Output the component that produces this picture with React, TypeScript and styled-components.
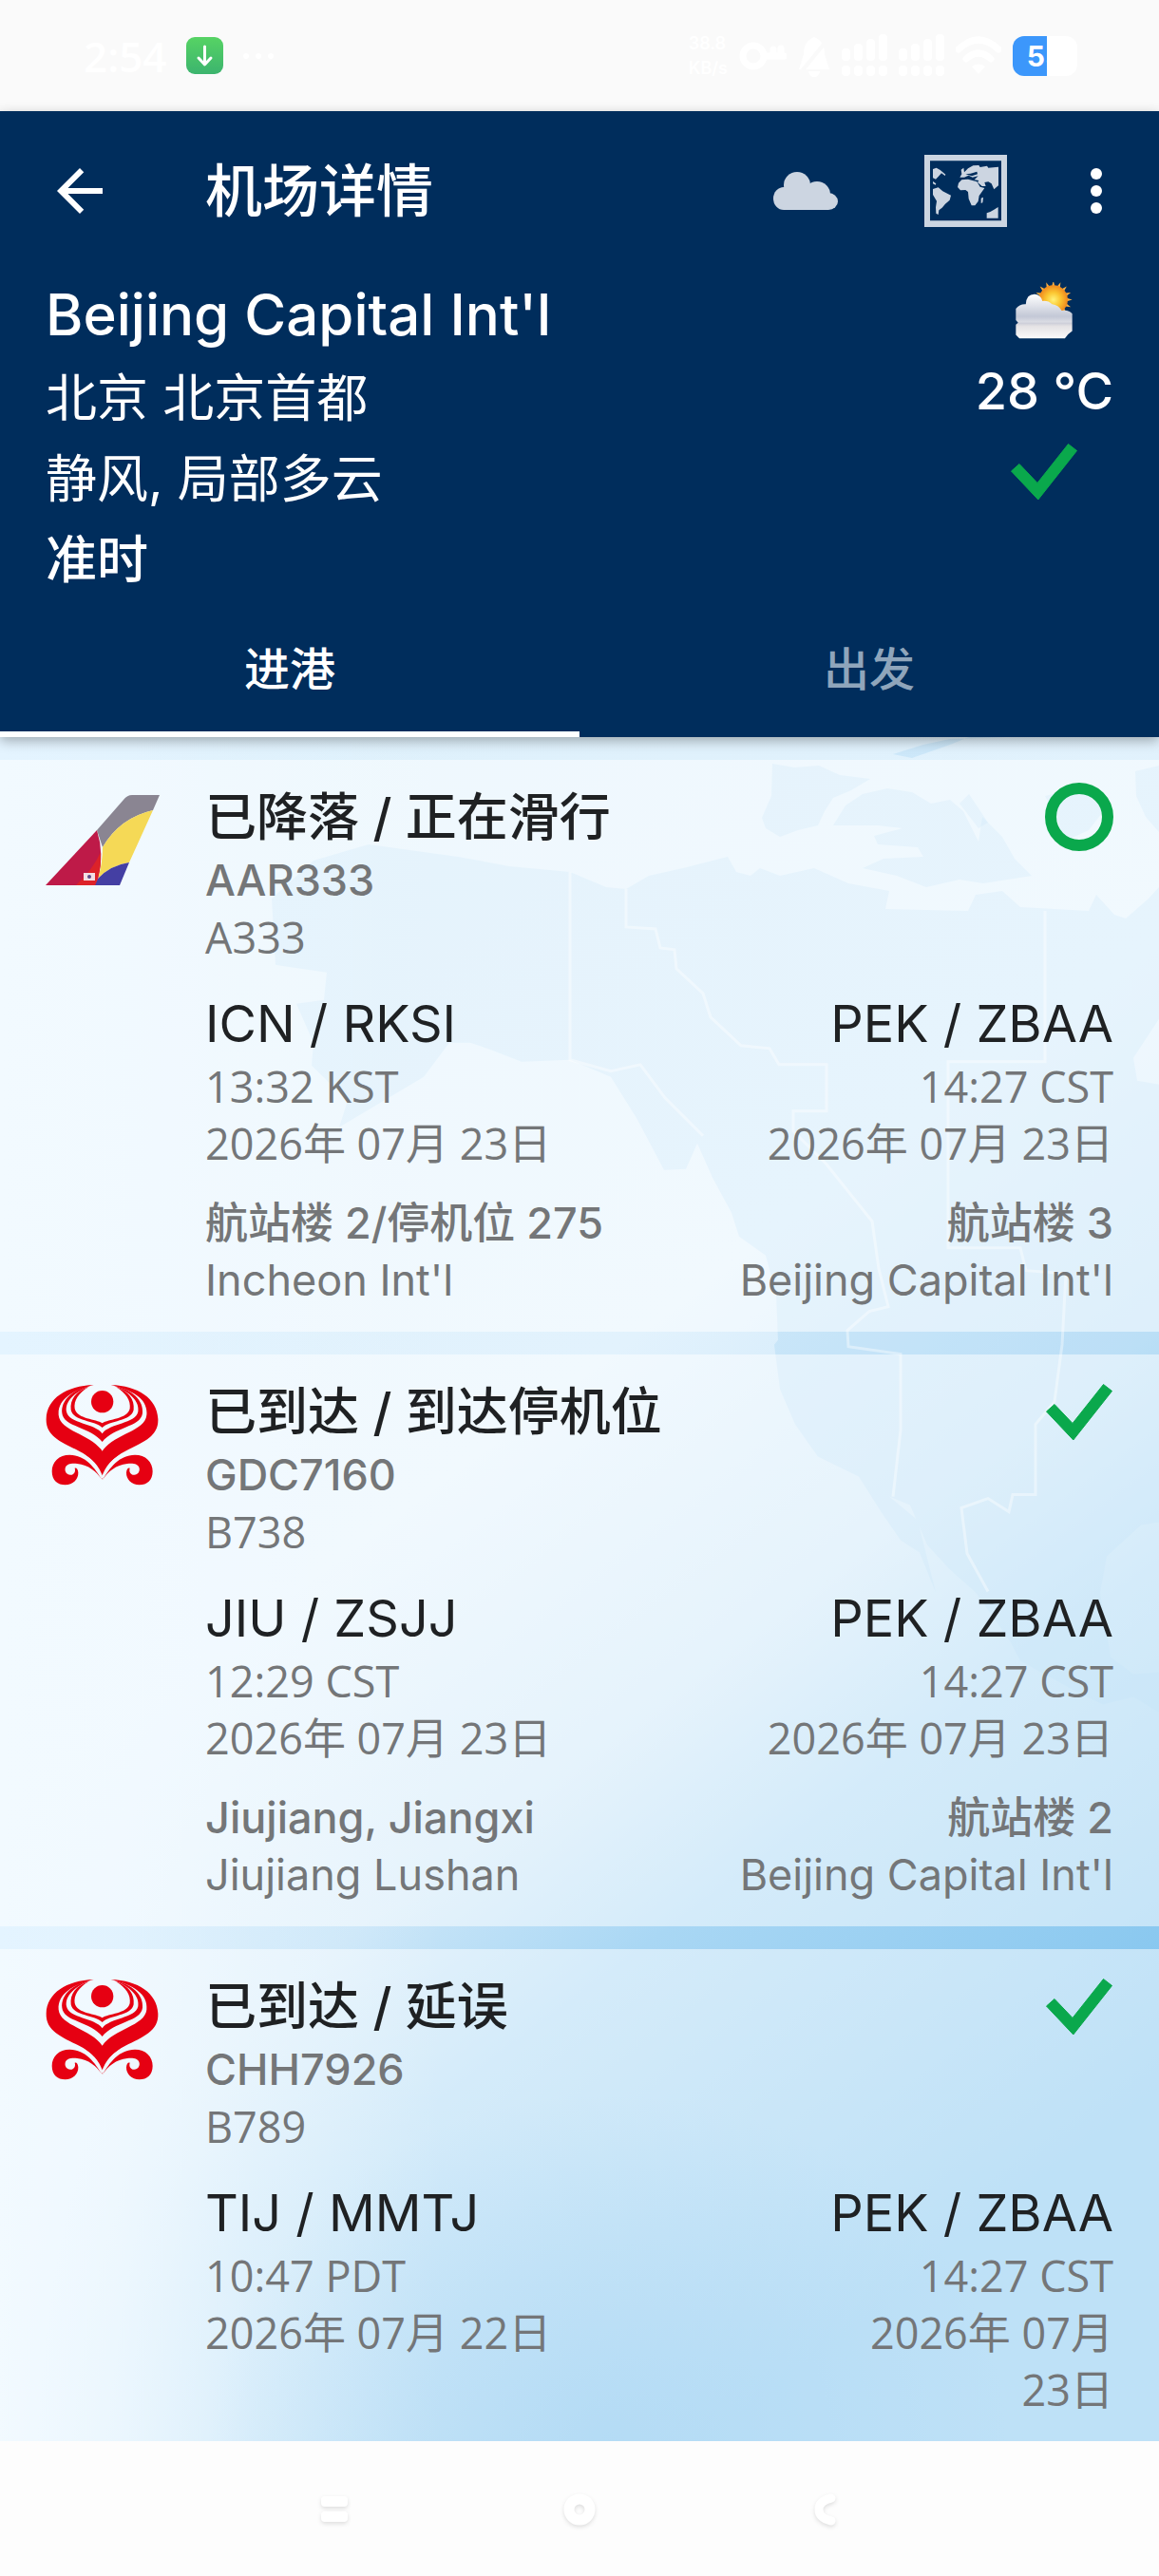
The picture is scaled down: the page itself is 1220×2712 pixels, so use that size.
import React, { useState } from "react";
import styled, { createGlobalStyle, css } from "styled-components";

type StatusKind = "taxiing" | "arrived";
type AirlineKind = "asiana" | "hainan";

type Stop = {
  codes: string;
  time: string;
  date: string;
  terminal?: string;
  airport?: string;
};

type Flight = {
  id: string;
  airline: AirlineKind;
  status: string;
  kind: StatusKind;
  aircraft: string;
  from: Stop;
  to: Stop;
  narrow?: boolean;
};

const flights: Flight[] = [
  {
    id: "AAR333",
    airline: "asiana",
    status: "已降落 / 正在滑行",
    kind: "taxiing",
    aircraft: "A333",
    from: {
      codes: "ICN / RKSI",
      time: "13:32 KST",
      date: "2026年 07月 23日",
      terminal: "航站楼 2/停机位 275",
      airport: "Incheon Int'l",
    },
    to: {
      codes: "PEK / ZBAA",
      time: "14:27 CST",
      date: "2026年 07月 23日",
      terminal: "航站楼 3",
      airport: "Beijing Capital Int'l",
    },
  },
  {
    id: "GDC7160",
    airline: "hainan",
    status: "已到达 / 到达停机位",
    kind: "arrived",
    aircraft: "B738",
    from: {
      codes: "JIU / ZSJJ",
      time: "12:29 CST",
      date: "2026年 07月 23日",
      terminal: "Jiujiang, Jiangxi",
      airport: "Jiujiang Lushan",
    },
    to: {
      codes: "PEK / ZBAA",
      time: "14:27 CST",
      date: "2026年 07月 23日",
      terminal: "航站楼 2",
      airport: "Beijing Capital Int'l",
    },
  },
  {
    id: "CHH7926",
    airline: "hainan",
    status: "已到达 / 延误",
    kind: "arrived",
    aircraft: "B789",
    narrow: true,
    from: {
      codes: "TIJ / MMTJ",
      time: "10:47 PDT",
      date: "2026年 07月 22日",
    },
    to: {
      codes: "PEK / ZBAA",
      time: "14:27 CST",
      date: "2026年 07月 23日",
    },
  },
];

const textFont = `Inter, "Noto Sans CJK SC", sans-serif`;
const figureFont = `"Open Sans", "Noto Sans CJK SC", sans-serif`;

const GlobalStyle = createGlobalStyle`
  *, *::before, *::after {
    box-sizing: border-box;
  }
  body {
    margin: 0;
    background: #fdfdfd;
    font-family: ${textFont};
    color: #1f2123;
  }
  h1, h2, h3, p {
    margin: 0;
    font-weight: 400;
  }
  button {
    border: 0;
    padding: 0;
    background: none;
    color: inherit;
    font: inherit;
    cursor: pointer;
  }
  svg {
    display: block;
    flex: none;
  }
`;

const Page = styled.div`
  min-height: 100vh;
  display: flex;
  flex-direction: column;
`;

/* status bar */

const StatusBar = styled.div`
  height: 117px;
  padding: 0 86px 0 88px;
  display: flex;
  align-items: center;
  justify-content: space-between;
  background: #fafafa;
  color: #fff;
`;

const StatusGroup = styled.div<{ $gap: number }>`
  display: flex;
  align-items: center;
  gap: ${(props) => props.$gap}px;
`;

const Clock = styled.span`
  font-family: ${figureFont};
  font-size: 44px;
  line-height: 60px;
  font-weight: 600;
`;

const NetSpeed = styled.span`
  display: flex;
  flex-direction: column;
  font-size: 18px;
  line-height: 26px;
  font-weight: 600;
`;

const Battery = styled.span`
  width: 68px;
  height: 42px;
  border-radius: 12px;
  background: linear-gradient(90deg, #3c97fb 36px, #fff 36px);
  font-size: 30px;
  line-height: 42px;
  font-weight: 700;
  text-align: center;
`;

/* header */

const Header = styled.header`
  position: relative;
  z-index: 1;
  background: #002d5c;
  color: #fff;
  box-shadow: 0 4px 12px rgba(0, 0, 0, 0.3);
`;

const Toolbar = styled.div`
  height: 168px;
  padding: 0 12px 0 48px;
  display: flex;
  align-items: center;
`;

const BackButton = styled.button`
  width: 168px;
`;

const ToolbarTitle = styled.h1`
  flex: 1;
  font-size: 60px;
  line-height: 80px;
  font-weight: 500;
`;

const ToolbarButton = styled.button<{ $width: number }>`
  width: ${(props) => props.$width}px;
  height: 168px;
  display: flex;
  align-items: center;
  justify-content: center;
`;

const Summary = styled.div`
  padding: 0 48px;
  display: flex;
  justify-content: space-between;
`;

const AirportName = styled.h2`
  font-size: 60px;
  line-height: 92px;
  font-weight: 500;
`;

const SummaryLine = styled.p<{ $strong?: boolean }>`
  font-size: 54px;
  line-height: 85px;
  font-weight: ${(props) => (props.$strong ? 500 : 400)};
`;

const Weather = styled.div`
  display: flex;
  flex-direction: column;
  align-items: center;
`;

const WeatherCell = styled.div`
  height: 84px;
  display: flex;
  align-items: center;
`;

const Temperature = styled.p`
  font-size: 54px;
  line-height: 85px;
  font-weight: 500;
`;

const Tabs = styled.div`
  display: grid;
  grid-template-columns: 1fr 1fr;
`;

const Tab = styled.button<{ $active: boolean }>`
  height: 144px;
  padding-bottom: 6px;
  font-size: 48px;
  font-weight: 500;
  color: ${(props) => (props.$active ? "#fff" : "#8fa5bb")};
  box-shadow: inset 0 -6px 0 ${(props) => (props.$active ? "#fff" : "transparent")};
`;

/* list */

const List = styled.main`
  position: relative;
  flex: 1;
  padding-top: 24px;
  display: flex;
  flex-direction: column;
  gap: 24px;
`;

const Backdrop = styled.svg`
  position: absolute;
  inset: 0;
  width: 100%;
  height: 100%;
  z-index: -1;
`;

const Card = styled.article`
  padding: 24px 48px;
  display: flex;
  gap: 48px;
  background: rgba(255, 255, 255, 0.5);
`;

const LogoBox = styled.div`
  width: 120px;
  height: 120px;
  display: flex;
  align-items: center;
  justify-content: center;
`;

const CardBody = styled.div`
  flex: 1;
  min-width: 0;
  display: flex;
  flex-direction: column;
  gap: 24px;
`;

const CardHead = styled.div`
  display: flex;
  justify-content: space-between;
`;

const Route = styled.div<{ $narrow?: boolean }>`
  display: grid;
  grid-template-columns: ${(props) =>
    props.$narrow ? "minmax(0, 1fr) 304px" : "auto auto"};
  justify-content: space-between;
  row-gap: 24px;
`;

const Block = styled.div<{ $end?: boolean }>`
  text-align: ${(props) => (props.$end ? "right" : "left")};
`;

const large = css`
  font-size: 54px;
  line-height: 73px;
`;

const FlightStatus = styled.h3`
  ${large}
  font-weight: 500;
`;

const Codes = styled.p`
  ${large}
`;

const Detail = styled.p<{ $strong?: boolean }>`
  font-size: 45px;
  line-height: 60px;
  font-weight: ${(props) => (props.$strong ? 500 : 400)};
  color: #747678;
`;

const Figures = styled(Detail)`
  font-family: ${figureFont};
`;

/* system navigation */

const NavBar = styled.nav`
  height: 143px;
  display: flex;
  align-items: center;
  justify-content: center;
  gap: 186px;
  background: #fdfdfd;
`;

const NavButton = styled.button`
  width: 72px;
  height: 72px;
  display: flex;
  align-items: center;
  justify-content: center;
  filter: drop-shadow(0 2px 2px rgba(0, 0, 0, 0.12));
`;

const CheckIcon = () => (
  <svg width="72" height="72" viewBox="0 0 72 72" aria-hidden="true">
    <path
      d="M1.5 36 10 28.5 29 48.5 61.5 7.5 70.5 14.5 29.8 66Z"
      fill="#0aa84c"
      stroke="#0aa84c"
      strokeLinejoin="round"
    />
  </svg>
);

const RingIcon = () => (
  <svg width="72" height="72" viewBox="0 0 72 72" aria-hidden="true">
    <circle cx="36" cy="36" r="30" fill="none" stroke="#0aa84c" strokeWidth="12" />
  </svg>
);

const AsianaLogo = () => (
  <svg width="120" height="95" viewBox="0 0 120 95" aria-label="Asiana Airlines">
    <path d="M54 37 82 5Q86 0 91 0H120L113 16Q78 24 60 55Z" fill="#8a8592" />
    <path d="M60 55Q78 24 113 16L88 71Q68 74 55 88Q60 72 60 55Z" fill="#f5d956" />
    <path d="M88 71 78 95H51L55 88Q68 74 88 71Z" fill="#443fa3" />
    <path d="M54 37 0 95H52L55 88Q62 62 54 37Z" fill="#be1a48" />
    <path d="M58 60Q50 78 32 95H52L55 88Q59 74 58 60Z" fill="#dc2229" />
    <rect x="40" y="82" width="12" height="8" fill="#f3dfe4" />
    <circle cx="46" cy="86" r="2" fill="#5a4a8a" />
  </svg>
);

const HainanLogo = () => (
  <svg width="120" height="108" viewBox="24 21 360 324" aria-label="Hainan Airlines">
    <g fill="#e60012">
      <circle cx="203" cy="80" r="35" />
      <path d="M176 27C90 30 28 70 26 134C24 190 75 208 130 236C168 256 192 282 203 326C214 282 238 256 276 236C331 208 382 190 379 134C376 70 316 30 230 27C300 44 348 72 343 122C338 174 238 182 203 236C168 182 70 174 65 122C62 72 110 44 176 27Z" />
      <path d="M166 30C108 42 72 76 76 116C80 160 168 160 203 207C238 160 326 160 330 116C334 76 298 42 240 30C288 48 322 78 316 112C308 150 226 148 203 181C180 148 98 150 90 112C84 78 118 48 166 30Z" />
      <path d="M160 34C120 46 100 74 104 106C110 142 182 140 203 162C224 140 296 142 302 106C306 74 286 46 246 34C278 52 294 78 290 102C282 136 222 134 203 148C184 134 124 136 116 102C112 78 128 52 160 34Z" />
      <path d="M203 328C180 290 150 248 100 248C66 248 44 270 44 300C44 328 62 343 86 343C110 343 128 326 127 304C126 294 122 288 116 290C120 302 112 312 102 311C90 310 84 300 86 290C90 276 106 274 124 276C160 280 184 300 203 328Z" />
      <path d="M203 328C226 290 256 248 306 248C340 248 362 270 362 300C362 328 344 343 320 343C296 343 278 326 279 304C280 294 284 288 290 290C286 302 294 312 304 311C316 310 322 300 320 290C316 276 300 274 282 276C246 280 222 300 203 328Z" />
    </g>
    <path
      d="M203 322C192 282 168 262 136 244M203 322C214 282 238 262 270 244"
      fill="none"
      stroke="#f1f9fe"
      strokeWidth="5"
    />
  </svg>
);

const CloudIcon = () => (
  <svg width="68" height="40" viewBox="0 0 68 40" fill="#ccd5e1" aria-hidden="true">
    <ellipse cx="11" cy="28" rx="11" ry="12" />
    <circle cx="25" cy="14" r="14" />
    <circle cx="46" cy="24" r="14" />
    <ellipse cx="58" cy="31" rx="10" ry="9" />
    <path d="M11 20H46L58 30V40H11Z" />
  </svg>
);

const MapIcon = () => (
  <svg width="87" height="76" viewBox="38 39 261 228" aria-hidden="true">
    <g fill="#ccd5e1">
      <path fillRule="evenodd" d="M38 39H299V267H38ZM56 58V247H281V58Z" />
      <path d="M65 84 76 80 88 87 105 101 103 105 92 97 82 108 74 116 65 112Z" />
      <path d="M65 123 75 130 73 134 65 130Z" />
      <path d="M65 147 82 142 96 154 122 167 118 182 104 194 94 206 84 214 82 228 75 224 74 205 77 185 65 165Z" />
      <path d="M146 128 156 118 176 116 190 120 204 124 214 140 228 144 218 158 211 168 208 186 198 199 187 199 178 178 176 156 168 150 152 151 143 141Z" />
      <path d="M150 110 156 100 154 86 162 80 164 94 176 82 192 73 210 72 214 78 236 74 240 80 272 77V136L258 148 250 130 240 124 228 126 232 138 220 138 206 126 210 120 196 118 208 106 190 110 178 104 164 110Z" />
      <path d="M217 176 224 173 222 190 217 192Z" />
      <path d="M235 223 246 219 258 212 271 204V239H235Z" />
    </g>
    <path d="M168 100 184 98 204 92 206 100 188 106Z" fill="#002d5c" />
  </svg>
);

const sunRays = Array.from({ length: 16 }, (_, i) => i * 22.5);

const WeatherIcon = () => (
  <svg width="60" height="60" viewBox="328 437 178 178" aria-label="局部多云">
    <defs>
      <radialGradient id="sun">
        <stop offset="0" stopColor="#fff27a" />
        <stop offset="0.5" stopColor="#fbc631" />
        <stop offset="1" stopColor="#f08a1f" />
      </radialGradient>
      <linearGradient id="cloud" x1="0" y1="0" x2="0" y2="1">
        <stop offset="0" stopColor="#ffffff" />
        <stop offset="0.5" stopColor="#c3c8d6" />
        <stop offset="0.62" stopColor="#d9dbe3" />
        <stop offset="0.66" stopColor="#cfd0da" />
        <stop offset="0.72" stopColor="#e4e2e4" />
        <stop offset="1" stopColor="#fbfafa" />
      </linearGradient>
    </defs>
    {sunRays.map((angle) => (
      <path
        key={angle}
        d="M441 450 446 433 451 450Z"
        fill="#f5ae42"
        transform={`rotate(${angle} 446 492)`}
      />
    ))}
    <circle cx="446" cy="492" r="45" fill="url(#sun)" />
    <path
      d="M329 520Q340 505 360 506Q362 474 388 475Q406 476 412 496Q430 494 442 506Q462 508 472 526Q494 522 505 536V590L492 600 482 613H340L329 602V570L336 564 329 556Z"
      fill="url(#cloud)"
    />
  </svg>
);

const BarsIcon = () => (
  <svg width="48" height="46" viewBox="0 0 48 46" fill="#fff" aria-hidden="true">
    {[0, 13, 26, 39].map((x, i) => (
      <React.Fragment key={x}>
        <rect x={x} y={15 - i * 5} width="9" height={13 + i * 5} rx="4" />
        <rect x={x} y="33" width="9" height="11" rx="4" />
      </React.Fragment>
    ))}
  </svg>
);

const landPaths = [
  "M388 113 482 126 536 136 600 142 638 158 659 160 683 146 719 138 766 126 775 142 790 146 800 138 821 146 857 138 893 154 936 162 932 181 1019 183 1027 166 1055 162 1074 179 1146 183 1154 166 1173 187 1185 191 1209 170 1220 158V297L1193 338 1197 362 1220 366V827L1201 830 1165 863 1158 901 1169 969 1193 987 1220 985V1027L1193 1011 1161 1019 1134 1006 1074 973 1063 952 1027 901 999 876 976 851 958 809 936 800 966 825 985 901 968 859 948 846 928 817 904 779 861 758 837 724 821 687 815 640 819 635 817 587 806 546 778 526 770 501 750 464 734 428 722 455 699 456 671 403 643 358 600 340 549 342 513 328 495 322 473 322 446 358 357 411 366 383 328 346 330 322 312 281 341 277 344 248 290 240 286 170 330 130Z",
  "M813 28 836 32 862 30 884 40 916 44 896 56 877 64 868 78 861 93 840 98 821 105 806 96 802 85 812 62Z",
  "M908 60 934 54 960 58 980 70 1000 66 1014 78 1030 110 1034 84 1055 105 1068 128 1086 146 1035 154 1010 150 975 158 944 146 908 138 930 128 972 126 966 116 924 113 920 104 950 96 924 93 877 93 890 72Z",
  "M940 18 972 8 1000 2 1060 0H1020L1000 8 960 22Z",
  "M1020 60 1040 90 1030 96 1010 70Z",
  "M1195 36 1220 30V100L1206 84 1196 62Z",
  "M1100 62 1126 56 1150 50 1160 80 1146 98 1120 110 1112 84Z",
];

const borderPaths = [
  "M600 142V340L643 352 674 345 700 380 740 420",
  "M659 160V200L690 202 695 222 710 224 712 244 740 270 748 295 780 325 810 328 820 345H870V394H835V415L870 450 918 510 925 560 935 600 915 605 892 625 893 642 948 650V730L940 800",
  "M1100 183V342H998V538H1074L1080 562 1122 565 1118 640 1110 700 1090 724V798H1066L1062 816 1040 802 1012 812 1018 860 1040 900",
];

const MapBackdrop = () => (
  <Backdrop viewBox="0 0 1220 1795" preserveAspectRatio="none" aria-hidden="true">
    <defs>
      <linearGradient id="sea" gradientUnits="userSpaceOnUse" x1="0" y1="0" x2="1296" y2="1728">
        <stop offset="0" stopColor="#ddf0fb" />
        <stop offset="0.42" stopColor="#e2f2fd" />
        <stop offset="0.57" stopColor="#cbe6f8" />
        <stop offset="0.66" stopColor="#a9d7f4" />
        <stop offset="0.79" stopColor="#8ecaf0" />
        <stop offset="0.87" stopColor="#7cc2ee" />
        <stop offset="1" stopColor="#7cc2ef" />
      </linearGradient>
      <linearGradient id="haze" x1="0" y1="0" x2="1" y2="0">
        <stop offset="0" stopColor="#e4f4ff" />
        <stop offset="0.1" stopColor="#e4f4ff" stopOpacity="0.8" />
        <stop offset="0.22" stopColor="#e4f4ff" stopOpacity="0.35" />
        <stop offset="0.38" stopColor="#e4f4ff" stopOpacity="0" />
      </linearGradient>
      <radialGradient id="deep">
        <stop offset="0" stopColor="#5fb2e9" stopOpacity="0.7" />
        <stop offset="1" stopColor="#5fb2e9" stopOpacity="0" />
      </radialGradient>
    </defs>
    <rect width="1220" height="1795" fill="url(#sea)" />
    <rect width="1220" height="1795" fill="url(#haze)" />
    <ellipse cx="640" cy="1790" rx="420" ry="360" fill="url(#deep)" />
    {landPaths.map((d) => (
      <path key={d} d={d} fill="#7cc2ee" fillOpacity="0.2" />
    ))}
    {borderPaths.map((d) => (
      <path key={d} d={d} fill="none" stroke="#fff" strokeOpacity="0.4" strokeWidth="3" />
    ))}
  </Backdrop>
);

const StopTimes = ({ stop, end }: { stop: Stop; end?: boolean }) => (
  <Block $end={end}>
    <Codes>{stop.codes}</Codes>
    <Figures>{stop.time}</Figures>
    <Figures>{stop.date}</Figures>
  </Block>
);

const StopPlace = ({ stop, end }: { stop: Stop; end?: boolean }) => {
  if (!stop.airport) return null;
  return (
    <Block $end={end}>
      <Detail $strong>{stop.terminal}</Detail>
      <Detail>{stop.airport}</Detail>
    </Block>
  );
};

const FlightCard = ({ flight }: { flight: Flight }) => (
  <Card>
    <LogoBox>
      {flight.airline === "asiana" ? <AsianaLogo /> : <HainanLogo />}
    </LogoBox>
    <CardBody>
      <CardHead>
        <div>
          <FlightStatus>{flight.status}</FlightStatus>
          <Detail $strong>{flight.id}</Detail>
          <Figures>{flight.aircraft}</Figures>
        </div>
        {flight.kind === "taxiing" ? <RingIcon /> : <CheckIcon />}
      </CardHead>
      <Route $narrow={flight.narrow}>
        <StopTimes stop={flight.from} />
        <StopTimes stop={flight.to} end />
        <StopPlace stop={flight.from} />
        <StopPlace stop={flight.to} end />
      </Route>
    </CardBody>
  </Card>
);

const App = () => {
  const [tab, setTab] = useState<"arrivals" | "departures">("arrivals");

  return (
    <Page>
      <GlobalStyle />
      <StatusBar>
        <StatusGroup $gap={20}>
          <Clock>2:54</Clock>
          <svg width="39" height="39" viewBox="0 0 39 39" aria-hidden="true">
            <defs>
              <linearGradient id="app" x1="0" y1="0" x2="0" y2="1">
                <stop offset="0" stopColor="#56d364" />
                <stop offset="1" stopColor="#3cb46e" />
              </linearGradient>
            </defs>
            <rect width="39" height="39" rx="9" fill="url(#app)" />
            <path
              d="M19.500 10V28M13 22l6.500 7 6.500-7"
              fill="none"
              stroke="#fff"
              strokeWidth="3"
              strokeLinecap="round"
              strokeLinejoin="round"
            />
          </svg>
          <svg width="34" height="8" viewBox="0 0 34 8" fill="#fff" aria-hidden="true">
            <circle cx="4" cy="4" r="3" />
            <circle cx="17" cy="4" r="3" />
            <circle cx="30" cy="4" r="3" />
          </svg>
        </StatusGroup>
        <StatusGroup $gap={12}>
          <NetSpeed>
            <span>38.8</span>
            <span>KB/s</span>
          </NetSpeed>
          <svg width="50" height="34" viewBox="0 0 50 34" fill="none" stroke="#fff" aria-hidden="true">
            <circle cx="15" cy="17" r="11" strokeWidth="7" />
            <path d="M27 17H48M36 17V10M44 17V9" strokeWidth="7" strokeLinecap="round" />
          </svg>
          <svg width="34" height="44" viewBox="0 0 34 44" aria-hidden="true">
            <path d="M17 2Q28 6 28 20L33 36H1L6 20Q6 6 17 2ZM11 38H23Q22 44 17 44Q12 44 11 38Z" fill="#fff" />
            <path d="M4 38 30 6" stroke="#fafafa" strokeWidth="4" />
          </svg>
          <BarsIcon />
          <BarsIcon />
          <svg width="48" height="42" viewBox="0 0 48 42" fill="none" stroke="#fff" aria-hidden="true">
            <path d="M3 14Q24-6 45 14M11 24Q24 12 37 24" strokeWidth="7" strokeLinecap="round" />
            <path d="M24 40 17 32Q24 27 31 32Z" fill="#fff" stroke="none" />
          </svg>
          <Battery>55</Battery>
        </StatusGroup>
      </StatusBar>

      <Header>
        <Toolbar>
          <BackButton aria-label="返回">
            <svg width="72" height="72" viewBox="0 0 24 24" fill="#fff">
              <path d="M20 11H7.830l5.590-5.590L12 4l-8 8 8 8 1.410-1.410L7.830 13H20v-2z" />
            </svg>
          </BackButton>
          <ToolbarTitle>机场详情</ToolbarTitle>
          <ToolbarButton $width={168} aria-label="天气">
            <CloudIcon />
          </ToolbarButton>
          <ToolbarButton $width={168} aria-label="地图">
            <MapIcon />
          </ToolbarButton>
          <ToolbarButton $width={108} aria-label="更多">
            <svg width="72" height="72" viewBox="0 0 24 24" fill="#fff">
              <circle cx="12" cy="6" r="2" />
              <circle cx="12" cy="12" r="2" />
              <circle cx="12" cy="18" r="2" />
            </svg>
          </ToolbarButton>
        </Toolbar>
        <Summary>
          <div>
            <AirportName>Beijing Capital Int'l</AirportName>
            <SummaryLine>北京 北京首都</SummaryLine>
            <SummaryLine>静风, 局部多云</SummaryLine>
            <SummaryLine $strong>准时</SummaryLine>
          </div>
          <Weather>
            <WeatherCell>
              <WeatherIcon />
            </WeatherCell>
            <Temperature>28 °C</Temperature>
            <WeatherCell>
              <CheckIcon />
            </WeatherCell>
          </Weather>
        </Summary>
        <Tabs role="tablist">
          <Tab
            role="tab"
            aria-selected={tab === "arrivals"}
            $active={tab === "arrivals"}
            onClick={() => setTab("arrivals")}
          >
            进港
          </Tab>
          <Tab
            role="tab"
            aria-selected={tab === "departures"}
            $active={tab === "departures"}
            onClick={() => setTab("departures")}
          >
            出发
          </Tab>
        </Tabs>
      </Header>

      <List>
        <MapBackdrop />
        {flights.map((flight) => (
          <FlightCard key={flight.id} flight={flight} />
        ))}
      </List>

      <NavBar aria-label="系统导航">
        <NavButton aria-label="最近任务">
          <svg width="28" height="28" viewBox="0 0 28 28" fill="#fff">
            <rect y="0" width="28" height="11" rx="4" />
            <rect y="16" width="28" height="11" rx="4" />
          </svg>
        </NavButton>
        <NavButton aria-label="主屏幕">
          <svg width="34" height="34" viewBox="0 0 34 34">
            <circle cx="17" cy="17" r="11" fill="none" stroke="#fff" strokeWidth="11" />
          </svg>
        </NavButton>
        <NavButton aria-label="返回上一页">
          <svg width="24" height="34" viewBox="0 0 24 34">
            <path
              d="M19 5Q6 8 6 17Q6 26 19 29"
              fill="none"
              stroke="#fff"
              strokeWidth="9"
              strokeLinecap="round"
            />
          </svg>
        </NavButton>
      </NavBar>
    </Page>
  );
};

export default App;
